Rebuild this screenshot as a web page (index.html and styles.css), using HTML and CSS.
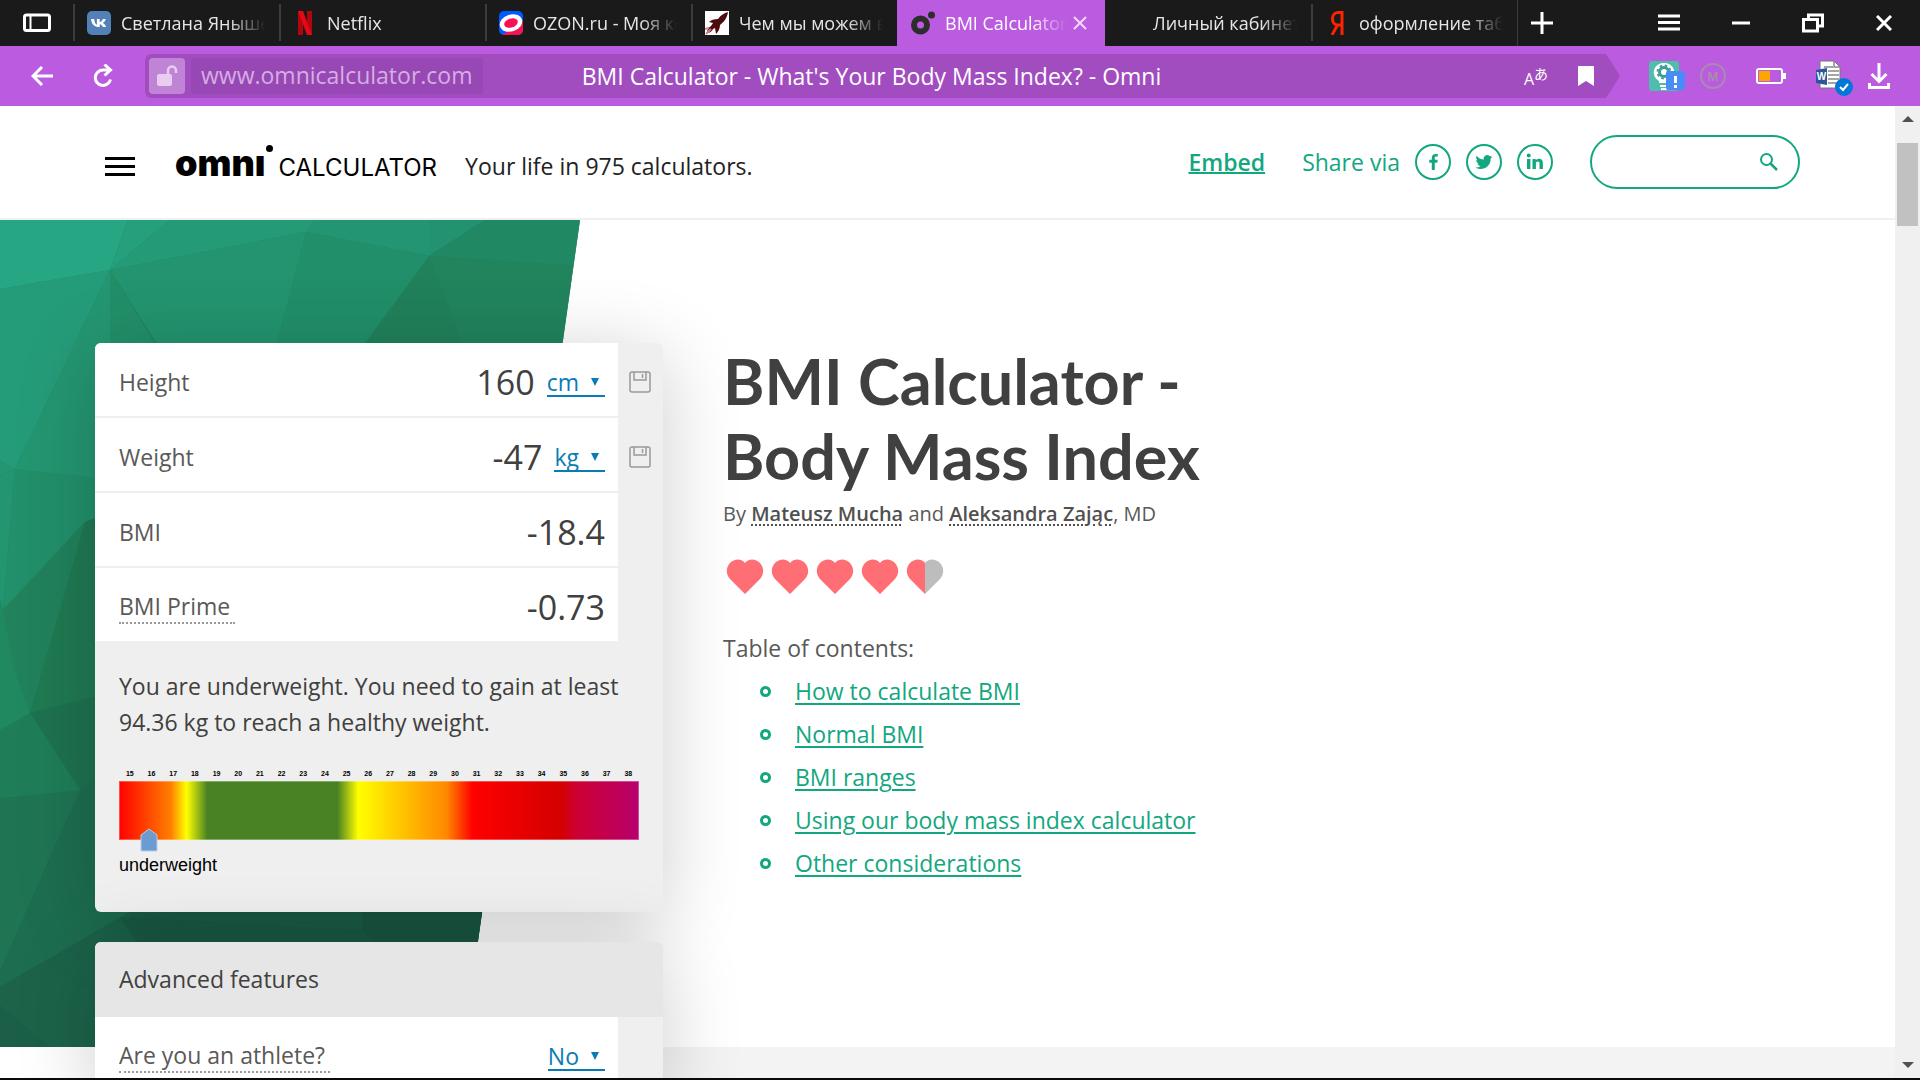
FILE: index.html
```html
<!DOCTYPE html>
<html lang="en">
  <head>
    <meta charset="UTF-8" />
    <meta name="viewport" content="width=device-width, initial-scale=1.0" />
    <title>BMI Calculator - What's Your Body Mass Index? - Omni</title>
    <link rel="stylesheet" href="styles.css">
  </head>
  <body>
    <div class="tab-bar">
      <button class="panel-button" aria-label="Side panel">
        <svg width="28" height="20" viewBox="0 0 28 20" fill="none" stroke="#fff" stroke-width="3"><rect x="1.5" y="2" width="25" height="15.5" rx="2" /><path d="M7.5 2v15" stroke-width="2" /></svg>
      </button>
      <div class="tab">
        <svg class="favicon" viewBox="0 0 24 24"><rect width="24" height="24" rx="5" fill="#5181b8" /><path d="M4 8h3.200c.3 3.700 1.700 5.500 2.700 5.800V8h2.800v3.200c1.500-.3 2.700-1.700 3.200-3.200h2.900c-.4 1.900-1.700 3.300-3 4 1.300.6 2.700 2 3.400 4H16c-.6-1.400-1.700-2.500-3.300-2.700V16h-.5C7.700 16 4.400 13.500 4 8z" fill="#fff" /></svg>
        <span class="tab-title">Светлана Янышева</span>
      </div>
      <div class="tab">
        <svg class="favicon" viewBox="0 0 24 24"><path d="M5 0h5v24H5z" fill="#b1060f" /><path d="M14 0h5v24h-5z" fill="#b1060f" /><path d="M5 0h5l9 24h-5z" fill="#e50914" /></svg>
        <span class="tab-title">Netflix</span>
      </div>
      <div class="tab">
        <svg class="favicon" viewBox="0 0 24 24"><rect width="24" height="24" rx="5" fill="#005bff" /><path d="M3 24l10-6 11-8v9a5 5 0 0 1-5 5z" fill="#f91155" /><ellipse cx="12" cy="12" rx="11.500" ry="8.500" fill="#fff" transform="rotate(-18 12 12)" /><ellipse cx="12" cy="12" rx="7" ry="4.500" fill="#f91155" transform="rotate(-18 12 12)" /></svg>
        <span class="tab-title">OZON.ru - Моя корзина</span>
      </div>
      <div class="tab">
        <svg class="favicon" viewBox="0 0 24 24"><rect width="24" height="24" fill="#fff" /><path d="M23 1c-4 1-7 3-10 7-4 0-7 1-9 3l4 1-2 3c-3 2-4 4-4 7 3 0 5-2 6-4l2-1 1 6c2-2 4-5 4-9 4-3 7-7 8-13z" fill="#4d0b10" /><path d="M1 23l5-5M0 18l4-1" stroke="#c88" stroke-width="2" /></svg>
        <span class="tab-title">Чем мы можем вам помочь</span>
      </div>
      <div class="tab tab-active">
        <svg class="favicon" viewBox="0 0 24 24"><circle cx="9.500" cy="14" r="6.500" fill="none" stroke="#2d2d2d" stroke-width="6" /><circle cx="20.500" cy="4" r="3.500" fill="#2d2d2d" /></svg>
        <span class="tab-title">BMI Calculator</span>
        <button class="tab-close" aria-label="Close tab"><svg width="14" height="14" viewBox="0 0 14 14" stroke="#f2d9fa" stroke-width="2"><path d="M1 1l12 12M13 1L1 13" /></svg></button>
      </div>
      <div class="tab">
        <span class="favicon"></span>
        <span class="tab-title">Личный кабинет</span>
      </div>
      <div class="tab">
        <svg class="favicon" viewBox="0 0 24 24"><path d="M17 0v24M17 1.500h-4c-3.500 0-5.500 3-5.500 6.500s2 6 5.500 6h4M12.500 14L7 24" fill="none" stroke="#fc2400" stroke-width="3" /></svg>
        <span class="tab-title">оформление таблиц</span>
      </div>
      <button class="new-tab" aria-label="New tab"><svg width="22" height="22" viewBox="0 0 22 22" stroke="#fff" stroke-width="3"><path d="M11 0v22M0 11h22" /></svg></button>
      <div class="window-buttons">
        <button aria-label="Menu"><svg width="22" height="18" viewBox="0 0 22 18" stroke="#fff" stroke-width="3"><path d="M0 2h22M0 8.500h22M0 15h22" /></svg></button>
        <button aria-label="Minimize"><svg width="18" height="18" viewBox="0 0 18 18" stroke="#fff" stroke-width="3"><path d="M0 9h18" /></svg></button>
        <button aria-label="Restore"><svg width="22" height="20" viewBox="0 0 22 20" fill="none" stroke="#fff" stroke-width="3"><path d="M6.500 6V2h14v11H16" /><rect x="1.500" y="6.500" width="14" height="11.500" /></svg></button>
        <button aria-label="Close"><svg width="16" height="16" viewBox="0 0 16 16" stroke="#fff" stroke-width="3"><path d="M1 1l14 14M15 1L1 15" /></svg></button>
      </div>
    </div>

    <div class="toolbar">
      <button aria-label="Back"><svg width="22" height="20" viewBox="0 0 22 20" fill="none" stroke="#fff" stroke-width="3"><path d="M22 10H2M11 1L2 10l9 9" /></svg></button>
      <button aria-label="Reload"><svg width="20" height="24" viewBox="0 0 20 24" fill="none" stroke="#fff" stroke-width="3"><path d="M17.500 15.500A7.700 7.700 0 1 1 10 6h7M11.500 0.500L17.500 6l-6 5.500" /></svg></button>
      <div class="address-bar">
        <div class="address-left">
          <button class="lock-button" aria-label="Not secure"><svg width="22" height="22" viewBox="0 0 22 22"><rect x="1" y="9" width="15" height="12" rx="2" fill="#e8cdf1" /><path d="M12 9V5.500a4 4 0 0 1 8 0V8" fill="none" stroke="#e8cdf1" stroke-width="2.500" /></svg></button>
          <span class="url">www.omnicalculator.com</span>
        </div>
        <span class="page-title">BMI Calculator - What's Your Body Mass Index? - Omni</span>
        <div class="address-right">
          <button class="translate-button" aria-label="Translate"><span>A</span><span class="kana">あ</span></button>
          <button aria-label="Bookmark"><svg width="16" height="20" viewBox="0 0 16 20"><path d="M0 1q0-1 1-1h14q1 0 1 1v19l-8-5-8 5z" fill="#fff" /></svg></button>
        </div>
      </div>
      <div class="extensions">
        <button aria-label="Hints"><svg width="38" height="32" viewBox="0 0 38 32"><rect x="1" y="1" width="30" height="30" rx="3" fill="#4fbdab" /><path d="M16 3a9.500 9.500 0 0 0-5 18v2h10v-2a9.500 9.500 0 0 0-5-18zM12 25h8v2h-8zM13 28h6v2h-6z" fill="#fff" /><circle cx="16" cy="12" r="4.500" fill="none" stroke="#3c9f96" stroke-width="3" /><circle cx="16" cy="12" r="6.500" fill="none" stroke="#3c9f96" stroke-width="2" stroke-dasharray="2.500 2.600" /><rect x="18" y="11" width="19" height="19" rx="2" fill="#4a8cf5" /><path d="M27.500 16v7M27.500 25v3" stroke="#fff" stroke-width="3" /></svg></button>
        <button aria-label="M"><svg width="26" height="26" viewBox="0 0 26 26"><circle cx="13" cy="13" r="12" fill="none" stroke="#a88bb0" stroke-width="2" /><text x="13" y="18" text-anchor="middle" class="badge-letter">M</text></svg></button>
        <button aria-label="Battery"><svg width="30" height="16" viewBox="0 0 30 16"><rect x="1" y="1" width="25" height="14" rx="2" fill="none" stroke="#fff" stroke-width="2" /><path d="M27 5h3v6h-3z" fill="#fff" /><path d="M3 3h11v10H3z" fill="#ffa500" /></svg></button>
        <button aria-label="Word"><svg width="38" height="40" viewBox="0 0 38 40"><path d="M4 5h14l6 6v21H4z" fill="#fff" stroke="#777" /><path d="M18 5v6h6M8 11h9M12 15h11M12 19h11M12 23h11M12 27h11" fill="none" stroke="#888" stroke-width="1.500" /><path d="M0 14l11-2v17l-11-2z" fill="#2b579a" /><text x="5.500" y="24" text-anchor="middle" class="word-letter">W</text><circle cx="28" cy="31" r="9" fill="#0078d7" /><path d="M24 31l3 3 5-6" fill="none" stroke="#fff" stroke-width="2" /></svg></button>
        <button aria-label="Downloads"><svg width="22" height="26" viewBox="0 0 22 26" fill="none" stroke="#fff" stroke-width="3"><path d="M11 0v18M3.500 11l7.500 7.500 7.500-7.500M1.500 20v4.500h19V20" /></svg></button>
      </div>
    </div>

    <div class="viewport">
      <div class="page">
        <header class="site-header">
          <button class="menu-button" aria-label="Open menu"><svg width="30" height="19" viewBox="0 0 30 19" stroke="#000" stroke-width="3"><path d="M0 1.500h30M0 9.500h30M0 17.500h30" /></svg></button>
          <a href="#" class="logo"><b>omnı</b><i></i><span>CALCULATOR</span></a>
          <span class="tagline">Your life in 975 calculators.</span>
          <a href="#" class="embed">Embed</a>
          <div class="share">
            <span>Share via</span>
            <a href="#" aria-label="Facebook"><svg width="36" height="36" viewBox="0 0 36 36"><circle cx="18" cy="18" r="17" /><path d="M19.800 26v-7.200h2.500l.4-3h-2.900v-1.800c0-.9.300-1.400 1.500-1.400h1.500V10c-.3 0-1.200-.1-2.200-.1-2.300 0-3.800 1.300-3.800 3.800v2.100h-2.500v3h2.500V26z" class="fill" /></svg></a>
            <a href="#" aria-label="Twitter"><svg width="36" height="36" viewBox="0 0 36 36"><circle cx="18" cy="18" r="17" /><path d="M26.500 12.700c-.6.300-1.300.5-2 .6.700-.4 1.300-1.100 1.500-1.900-.7.400-1.400.7-2.200.8a3.500 3.500 0 0 0-6 3.200c-2.900-.1-5.500-1.500-7.200-3.700-.9 1.600-.4 3.600 1.100 4.700-.6 0-1.100-.2-1.600-.4 0 1.700 1.200 3.100 2.800 3.500-.5.100-1 .2-1.600.1.400 1.400 1.700 2.400 3.300 2.400a7 7 0 0 1-5.200 1.500c5.900 3.700 15.500.4 15.300-9 .7-.5 1.300-1.100 1.800-1.800z" class="fill" /></svg></a>
            <a href="#" aria-label="LinkedIn"><svg width="36" height="36" viewBox="0 0 36 36"><circle cx="18" cy="18" r="17" /><path d="M10 15h3.400v10H10zM15.500 15h3.200v1.400c.5-.9 1.600-1.700 3.200-1.700 3.300 0 4 2.200 4 5V25h-3.400v-4.800c0-1.300 0-2.600-1.700-2.600s-1.900 1.200-1.900 2.500V25h-3.400z" class="fill" /><circle cx="11.700" cy="11.500" r="2" class="fill" /></svg></a>
          </div>
          <form class="search">
            <input type="text" aria-label="Search" />
            <button type="button" aria-label="Search"><svg width="18" height="18" viewBox="0 0 18 18" fill="none" stroke="#13a780" stroke-width="2"><circle cx="6.500" cy="6.500" r="5.500" /><path d="M10.500 10.500l6.500 6.500" stroke-width="2.500" /></svg></button>
          </form>
        </header>

        <main class="content">
          <div class="backdrop">
            <svg width="580" height="827" viewBox="0 0 580 827">
              <clipPath id="slant"><path d="M0 0h580L463 827H0z" /></clipPath>
              <g clip-path="url(#slant)">
                <path d="M0 0h580v827H0z" fill="#21835d" />
                <path d="M0 600h580v227H0z" fill="#1b5f48" />
                <path d="M0 0h128l-18 50L0 69z" fill="#27a684" />
                <path d="M128 0h42l-60 50z" fill="#259f7c" />
                <path d="M170 0h145l-9 12L110 50z" fill="#249a77" />
                <path d="M315 0h114v36L306 12z" fill="#239572" />
                <path d="M429 0h56l-56 36z" fill="#239270" />
                <path d="M485 0h95v46L429 36z" fill="#208862" />
                <path d="M429 36l151 10-12 140-106-63z" fill="#21845d" />
                <path d="M429 36l33 87 20 90H300z" fill="#20815a" />
                <path d="M306 12l123 24-130 177h-45z" fill="#218f69" />
                <path d="M110 50l196-38-52 200-60-30z" fill="#23946f" />
                <path d="M0 69l110-19L15 249l-15-9z" fill="#259c79" />
                <path d="M110 50v210l-95-11z" fill="#249671" />
                <path d="M110 50l110 180-110 40z" fill="#228f69" />
                <path d="M0 240l15 9-15 7z" fill="#249672" />
                <path d="M0 256l15-7-12 141-3-10z" fill="#239570" />
                <path d="M15 249l85 9v38l-15 6L3 390z" fill="#22906a" />
                <path d="M0 380l3 10 11 60 16 43-30 17z" fill="#21895f" />
                <path d="M3 390l82-88-37 128-18 63z" fill="#21825c" />
                <path d="M85 302l200-80v260H95l-65 11z" fill="#1f7a52" />
                <path d="M0 510l30-17 50 77-80 8z" fill="#1f7e58" />
                <path d="M30 493l70-18v88l-20 7z" fill="#1e724f" />
                <path d="M0 578l80-8L0 752z" fill="#1f7553" />
                <path d="M80 570l50-40v162L0 767v-15z" fill="#1d6e50" />
                <path d="M0 767l129-74 90 134H0z" fill="#1c634a" />
                <path d="M0 785l50 42H0z" fill="#1b5f48" />
                <path d="M120 697l242 13 118 137H219z" fill="#1a5c45" />
                <path d="M362 660h140l-20 167-120-117z" fill="#1a5843" />
              </g>
            </svg>
            <div class="gray-strip"></div>
          </div>

          <div class="calculator">
            <section class="card">
              <div class="rows">
                <div class="row">
                  <label for="height">Height</label>
                  <input id="height" type="text" value="160" />
                  <span class="unit"><select aria-label="Height unit"><option>cm</option><option>m</option></select></span>
                </div>
                <div class="row">
                  <label for="weight">Weight</label>
                  <input id="weight" type="text" value="-47" />
                  <span class="unit"><select aria-label="Weight unit"><option>kg</option><option>g</option></select></span>
                </div>
                <div class="row">
                  <label for="bmi">BMI</label>
                  <input id="bmi" type="text" value="-18.4" />
                </div>
                <div class="row">
                  <label for="prime" class="hint">BMI Prime</label>
                  <input id="prime" type="text" value="-0.73" />
                </div>
              </div>
              <div class="locks">
                <button aria-label="Save height"><svg width="22" height="22" viewBox="0 0 22 22" fill="none" stroke="#999" stroke-width="1.500"><rect x="1" y="1" width="20" height="20" rx="2" /><path d="M5 1v8h12V1M13.500 3v4" /></svg></button>
                <button aria-label="Save weight"><svg width="22" height="22" viewBox="0 0 22 22" fill="none" stroke="#999" stroke-width="1.500"><rect x="1" y="1" width="20" height="20" rx="2" /><path d="M5 1v8h12V1M13.500 3v4" /></svg></button>
              </div>
              <div class="result">
                <p>You are underweight. You need to gain at least 94.36 kg to reach a healthy weight.</p>
                <div class="scale">
                  <div class="scale-numbers">
                    <span>15</span><span>16</span><span>17</span><span>18</span><span>19</span><span>20</span><span>21</span><span>22</span><span>23</span><span>24</span><span>25</span><span>26</span><span>27</span><span>28</span><span>29</span><span>30</span><span>31</span><span>32</span><span>33</span><span>34</span><span>35</span><span>36</span><span>37</span><span>38</span>
                  </div>
                  <div class="scale-bar">
                    <svg class="pointer" width="18" height="24" viewBox="0 0 18 24"><path d="M1 7l8-6 8 6v16H1z" fill="#6b9bd1" stroke="#b5cdec" /></svg>
                  </div>
                  <div class="scale-label">underweight</div>
                </div>
              </div>
            </section>

            <section class="card">
              <h2>Advanced features</h2>
              <div class="rows">
                <div class="row">
                  <label for="athlete" class="hint">Are you an athlete?</label>
                  <span class="unit"><select id="athlete"><option>No</option><option>Yes</option></select></span>
                </div>
              </div>
            </section>
          </div>

          <article class="article">
            <h1>BMI Calculator - Body Mass Index</h1>
            <p class="byline">By <a href="#">Mateusz Mucha</a> and <a href="#">Aleksandra Zając</a>, MD</p>
            <div class="hearts">
              <svg viewBox="0 0 38 35"><path d="M19 35L4 20C-6 8 10-6 19 4c9-10 25 4 15 16z" /></svg>
              <svg viewBox="0 0 38 35"><path d="M19 35L4 20C-6 8 10-6 19 4c9-10 25 4 15 16z" /></svg>
              <svg viewBox="0 0 38 35"><path d="M19 35L4 20C-6 8 10-6 19 4c9-10 25 4 15 16z" /></svg>
              <svg viewBox="0 0 38 35"><path d="M19 35L4 20C-6 8 10-6 19 4c9-10 25 4 15 16z" /></svg>
              <svg viewBox="0 0 38 35"><path d="M19 35L4 20C-6 8 10-6 19 4z" /><path d="M19 35V4c9-10 25 4 15 16z" class="empty" /></svg>
            </div>
            <p class="toc-title">Table of contents:</p>
            <ul class="toc">
              <li><a href="#">How to calculate BMI</a></li>
              <li><a href="#">Normal BMI</a></li>
              <li><a href="#">BMI ranges</a></li>
              <li><a href="#">Using our body mass index calculator</a></li>
              <li><a href="#">Other considerations</a></li>
            </ul>
          </article>
        </main>
      </div>
      <div class="scrollbar">
        <svg width="12" height="6" viewBox="0 0 12 6"><path d="M0 6l6-6 6 6z" fill="#505050" /></svg>
        <div class="thumb"></div>
        <svg width="12" height="6" viewBox="0 0 12 6"><path d="M0 0l6 6 6-6z" fill="#505050" /></svg>
      </div>
    </div>
    <div class="taskbar"></div>
  </body>
</html>
```
FILE: styles.css
```css
* {
  box-sizing: border-box;
}

body {
  margin: 0;
  height: 100vh;
  display: flex;
  flex-direction: column;
  overflow: hidden;
  font-family: "Open Sans", "Noto Sans", sans-serif;
  font-size: 23px;
  color: #595959;
}

button {
  padding: 0;
  border: none;
  background: none;
  display: flex;
  align-items: center;
  justify-content: center;
  cursor: pointer;
}

svg {
  display: block;
  flex-shrink: 0;
}

/* browser tabs */
.tab-bar {
  height: 46px;
  display: flex;
  align-items: stretch;
  flex-shrink: 0;
  background-color: #1a1a1a;
  color: #e6e6e6;
}

.panel-button {
  width: 73px;
  flex-shrink: 0;
}

.tab {
  width: 206px;
  display: flex;
  align-items: center;
  gap: 10px;
  padding: 0 14px 0 12px;
  border-left: 2px solid;
  border-image: linear-gradient(transparent 5px, #3c3c3c 5px, #3c3c3c 40px, transparent 40px) 1;
}

.tab-active,
.tab-active + .tab {
  border-image: none;
  border-color: transparent;
}

.tab-active {
  width: 208px;
  padding-left: 14px;
  background-color: #bb5ce0;
  border: none;
  color: #fff;
}

.favicon {
  width: 24px;
  height: 24px;
  flex-shrink: 0;
}

.tab-title {
  flex: 1;
  overflow: hidden;
  white-space: nowrap;
  font-size: 18px;
  mask-image: linear-gradient(to right, #000 calc(100% - 36px), transparent);
}

.tab-close {
  flex-shrink: 0;
  margin: 0 4px 0 -4px;
}

.new-tab {
  width: 48px;
  border-left: 1px solid #3c3c3c;
}

.window-buttons {
  margin-left: auto;
  display: flex;
  gap: 52px;
  padding-right: 28px;
}

/* address row */
.toolbar {
  height: 60px;
  display: flex;
  align-items: center;
  flex-shrink: 0;
  gap: 40px;
  padding: 0 30px 0 31px;
  background-color: #bb5ce0;
  color: #fff;
}

.address-bar {
  flex: 1;
  height: 44px;
  display: grid;
  grid-template-columns: 1fr auto 1fr;
  align-items: center;
  margin-left: -8px;
  padding: 0 26px 0 4px;
  border-radius: 6px;
  background-color: #a14dc0;
  clip-path: polygon(0 0, calc(100% - 14px) 0, 100% 50%, calc(100% - 14px) 100%, 0 100%);
}

.address-left,
.address-right {
  display: flex;
  align-items: center;
}

.lock-button {
  width: 36px;
  height: 36px;
  border-radius: 4px;
  background-color: #bf84d5;
}

.url {
  height: 36px;
  line-height: 34px;
  margin-left: 6px;
  padding: 0 10px;
  border-radius: 4px;
  background-color: #9848b4;
  color: #d5aee3;
}

.address-right {
  justify-content: flex-end;
  gap: 30px;
}

.translate-button {
  align-items: flex-end;
  color: #fff;
  font-family: "Open Sans", "Noto Sans CJK JP", sans-serif;
  font-size: 16px;
  line-height: 20px;
}

.kana {
  padding-bottom: 5px;
  font-size: 14px;
}

.extensions {
  display: flex;
  align-items: center;
  gap: 14px;
  margin-left: -12px;
}

.extensions button:nth-child(3) {
  margin: 0 16px;
}

.badge-letter {
  font-size: 13px;
  font-weight: bold;
  fill: #a88bb0;
}

.word-letter {
  font-size: 10px;
  font-weight: bold;
  fill: #fff;
}

/* page area */
.viewport {
  flex: 1;
  min-height: 0;
  display: flex;
  background-color: #fff;
}

.page {
  flex: 1;
  overflow: hidden;
}

.scrollbar {
  width: 25px;
  display: flex;
  flex-direction: column;
  align-items: center;
  padding: 10px 2px;
  background-color: #f0f0f0;
}

.thumb {
  width: 100%;
  height: 83px;
  margin: 21px 0 auto;
  background-color: #c1c1c1;
}

.taskbar {
  height: 2px;
  flex-shrink: 0;
  background-color: #0c080c;
}

/* site header */
.site-header {
  height: 114px;
  display: flex;
  align-items: center;
  padding: 0 95px 0 105px;
  border-bottom: 2px solid #f0f0f0;
}

.menu-button {
  margin: 8px 40px 0 0;
}

.logo {
  display: flex;
  align-items: baseline;
  margin: 2px 28px 0 0;
  color: #000;
  font-family: Inter, sans-serif;
  font-size: 24px;
  text-decoration: none;
}

.logo b {
  font-size: 36px;
  font-weight: 900;
  line-height: 36px;
}

.logo i {
  width: 7px;
  height: 7px;
  margin-right: 6px;
  border-radius: 50%;
  background-color: #000;
  align-self: flex-start;
}

.tagline {
  margin-top: 8px;
  color: #222;
}

.embed {
  margin-left: auto;
  color: #13a780;
  font-weight: 600;
  text-decoration-thickness: 2px;
}

.share {
  display: flex;
  align-items: center;
  gap: 15px;
  margin-left: 37px;
  color: #13a780;
}

.share circle {
  fill: none;
  stroke: #13a780;
  stroke-width: 2;
}

.share .fill {
  fill: #13a780;
  stroke: none;
}

.search {
  width: 210px;
  height: 54px;
  display: flex;
  margin-left: 37px;
  padding: 0 20px;
  border: 2px solid #13a780;
  border-radius: 27px;
}

.search input {
  flex: 1;
  min-width: 0;
  border: none;
  outline: none;
  background: none;
  font: inherit;
}

/* main */
.content {
  position: relative;
  display: flex;
  align-items: flex-start;
  gap: 60px;
  padding: 123px 95px 0;
}

.backdrop {
  position: absolute;
  inset: 0;
}

.gray-strip {
  height: 60px;
  margin-left: 463px;
  background-color: #f3f3f3;
}

.calculator {
  position: relative;
  width: 568px;
  display: grid;
  gap: 30px;
}

.card {
  display: grid;
  grid-template-columns: 1fr 45px;
  overflow: hidden;
  border-radius: 6px;
  background-color: #efefef;
  box-shadow: 0 12px 80px rgba(0, 0, 0, 0.2);
}

.card h2 {
  grid-column: 1 / -1;
  margin: 0;
  padding: 0 24px;
  background-color: #e6e6e6;
  color: #404040;
  font-size: 23px;
  font-weight: 400;
  line-height: 75px;
}

.rows {
  display: grid;
  gap: 2px;
}

.row {
  height: 73px;
  display: flex;
  align-items: center;
  padding: 4px 13px 0 24px;
  background-color: #fff;
}

.row label {
  margin-right: auto;
}

.hint {
  padding-right: 5px;
  border-bottom: 2px dotted #999;
}

.row input {
  width: 130px;
  padding: 0;
  border: none;
  outline: none;
  background: none;
  color: #404040;
  font: inherit;
  font-size: 34px;
  text-align: right;
}

.unit {
  position: relative;
  margin-left: 12px;
}

.unit::after {
  content: "";
  position: absolute;
  right: 6px;
  top: 12px;
  border: 4px solid transparent;
  border-top: 8px solid #0a7cb5;
  border-bottom: none;
}

.unit select {
  appearance: none;
  field-sizing: content;
  padding: 0 26px 0 0;
  border: none;
  border-bottom: 2px solid #0a7cb5;
  background: none;
  color: #0a7cb5;
  font: inherit;
  line-height: 26px;
}

.locks {
  display: grid;
  grid-template-rows: 73px 73px;
  gap: 2px;
  padding: 2px 2px 0 0;
}

.result {
  grid-column: 1 / -1;
  padding: 27px 24px 36px;
}

.result p {
  margin: 0;
  color: #404040;
  line-height: 36px;
}

.scale {
  margin-top: 29px;
  font-family: "Liberation Sans", sans-serif;
  color: #000;
}

.scale-numbers {
  display: flex;
  font-size: 7px;
  font-weight: bold;
  line-height: 10px;
  text-align: center;
}

.scale-numbers span {
  flex: 1;
}

.scale-bar {
  position: relative;
  height: 59px;
  margin-top: 2px;
  border: 1px solid rgba(255, 255, 255, 0.3);
  background: linear-gradient(to right, #f00 0%, #ff7f00 10%, #ff0 13%, #488225 17%, #488225 42%, #ff0 46%, #ff8800 63%, #f00 68%, #d40000 85%, #cc0033 88%, #b8006c 100%) border-box;
}

.pointer {
  position: absolute;
  left: 20px;
  top: 46px;
}

.scale-label {
  margin-top: 14px;
  font-size: 18px;
  line-height: 22px;
}

/* article */
.article {
  position: relative;
  width: 520px;
}

.article h1 {
  margin: 0;
  color: #404040;
  font-family: Lato, sans-serif;
  font-size: 63px;
  font-weight: 700;
  line-height: 75px;
}

.article p {
  margin: 0;
}

.byline {
  padding-top: 6px;
  font-size: 20px;
  line-height: 30px;
}

.byline a {
  color: #505050;
  font-weight: 600;
  text-decoration: underline dotted 2px;
  text-underline-offset: 3px;
}

.hearts {
  display: flex;
  gap: 7px;
  padding: 30px 0 0 3px;
}

.hearts svg {
  width: 38px;
  height: 35px;
  fill: #ff6e74;
}

.hearts .empty {
  fill: #bdbdbd;
}

.article .toc-title {
  padding-top: 33px;
  line-height: 43px;
}

.toc {
  margin: 0;
  padding: 0;
  list-style: none;
}

.toc li {
  display: flex;
  align-items: center;
  gap: 24px;
  padding-left: 37px;
  line-height: 43px;
}

.toc li::before {
  content: "";
  width: 5px;
  height: 5px;
  border: 3px solid #13a780;
  border-radius: 50%;
}

.toc a {
  color: #13a780;
  text-decoration-thickness: 2px;
  text-underline-offset: 3px;
}
```
